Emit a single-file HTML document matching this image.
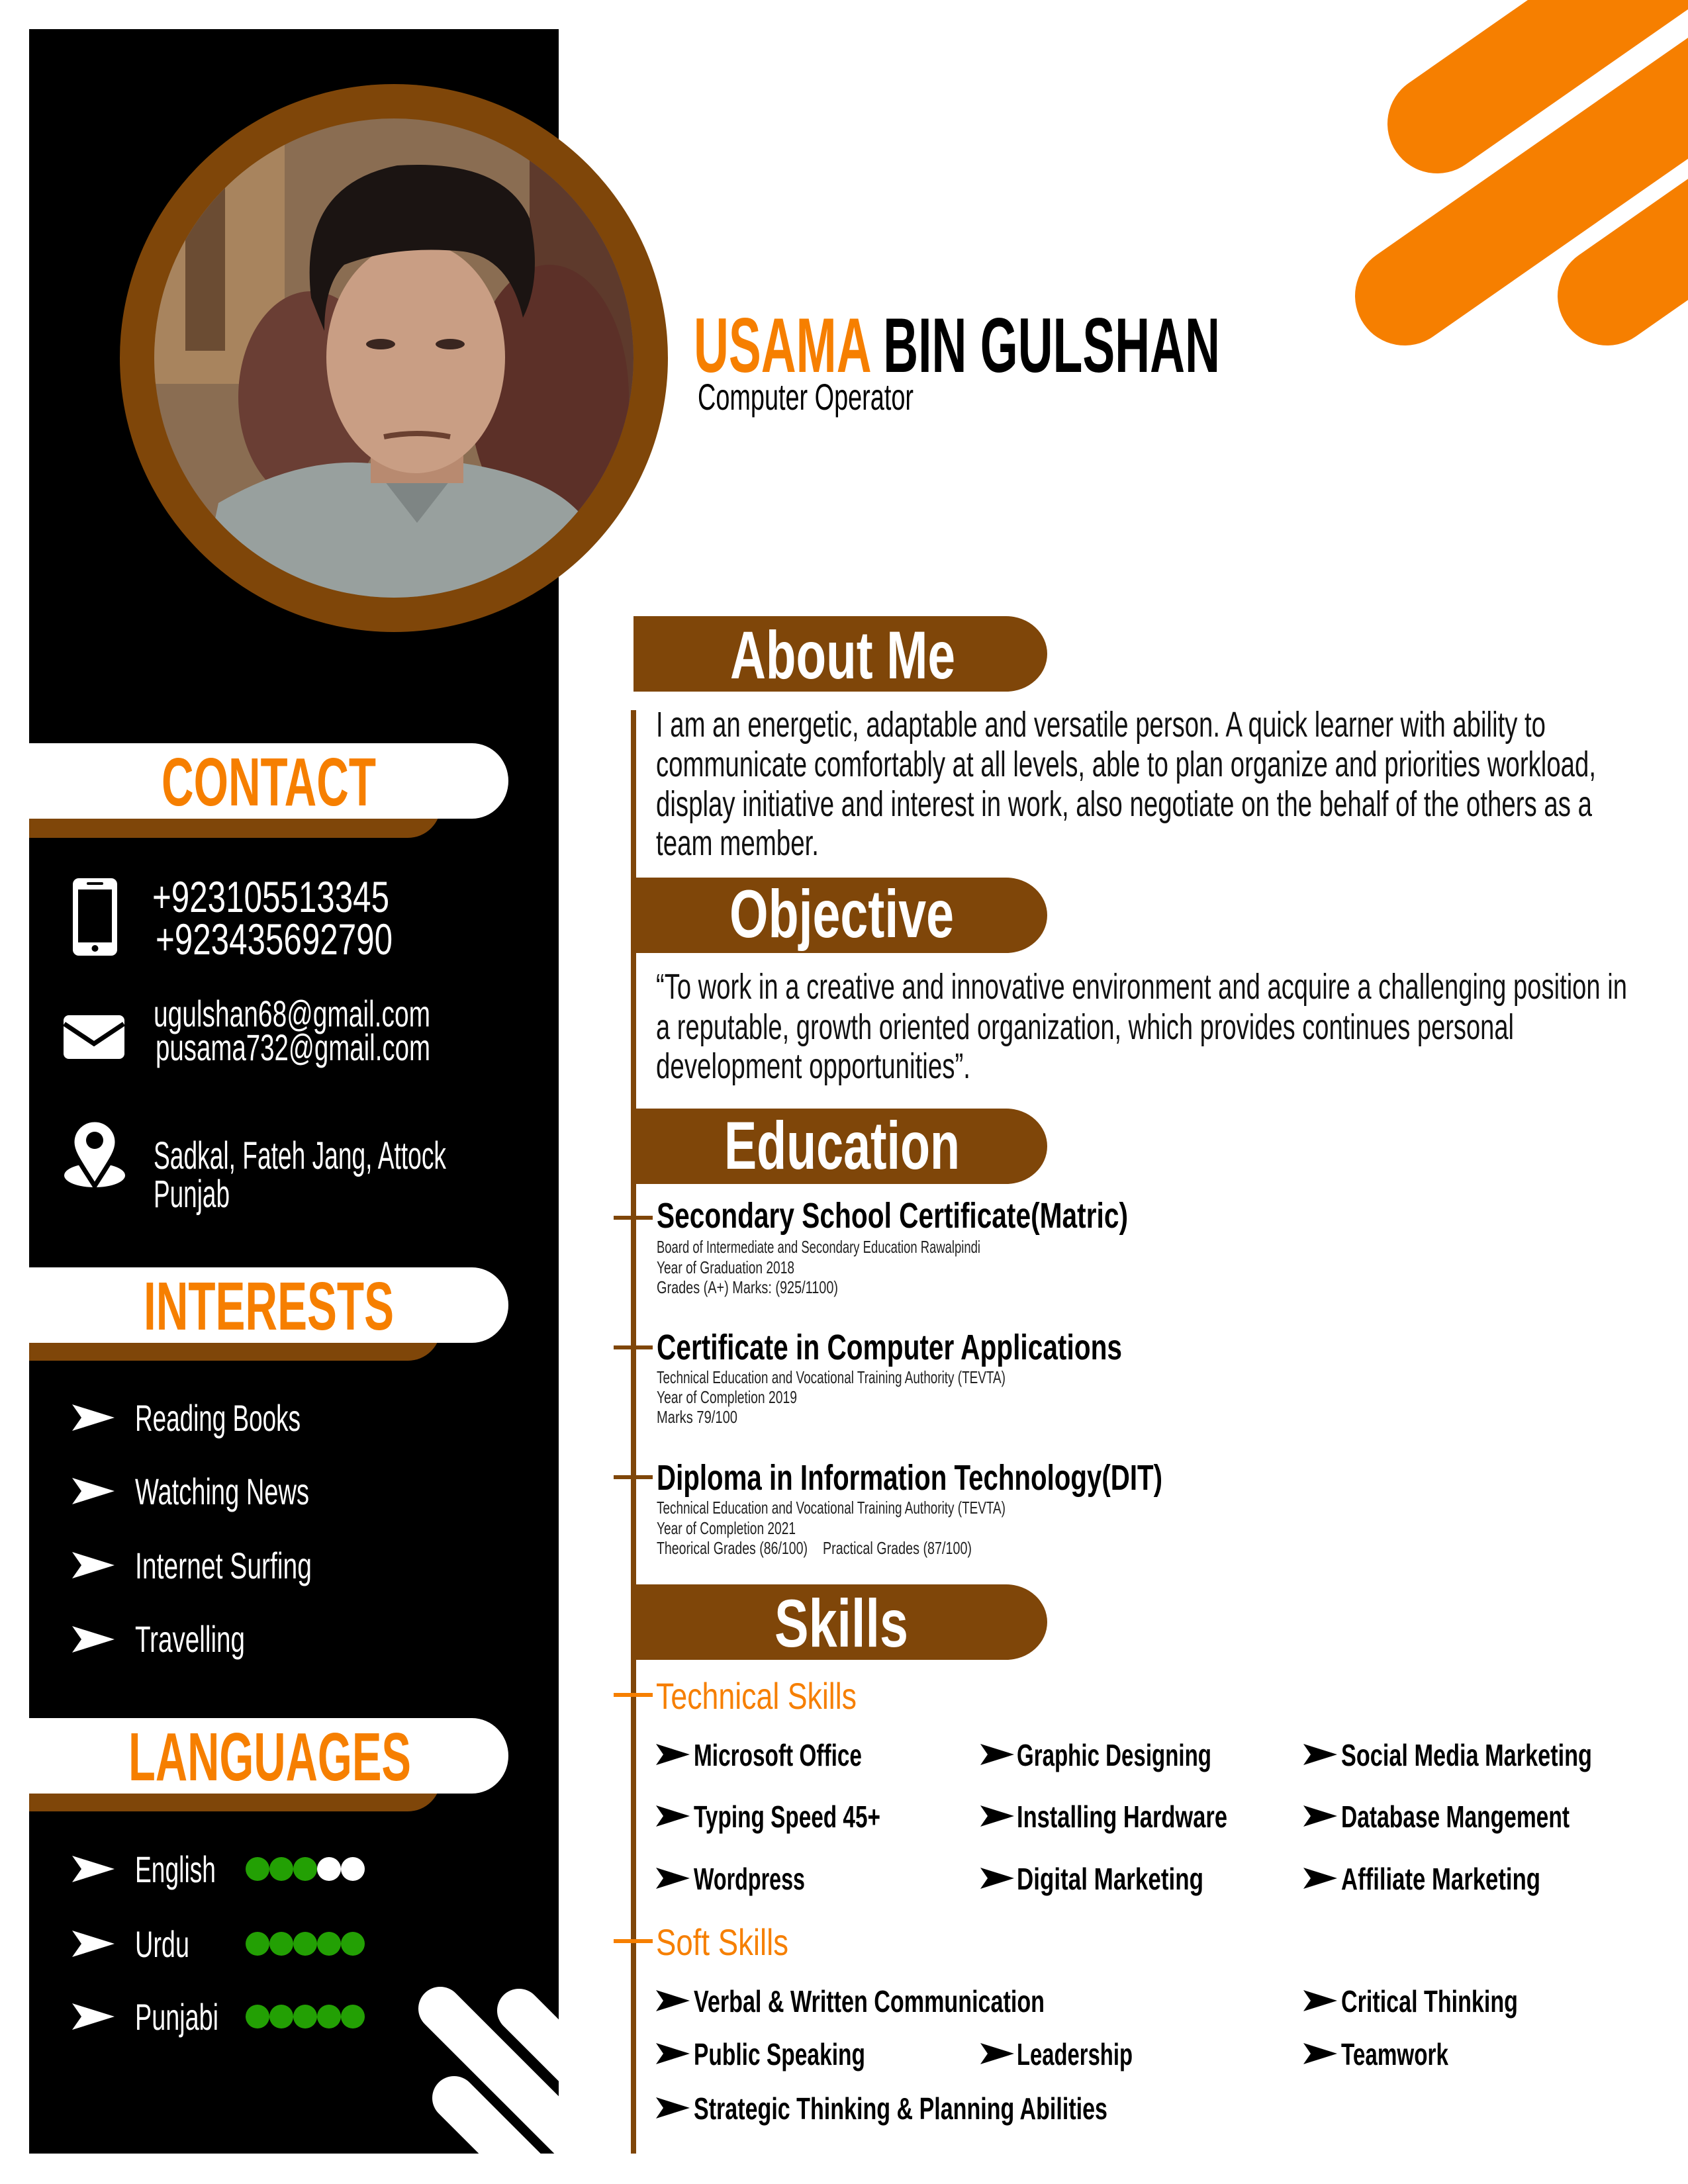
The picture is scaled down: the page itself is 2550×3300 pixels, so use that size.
<!DOCTYPE html>
<html><head><meta charset="utf-8"><style>
html,body{margin:0;padding:0;background:#fff;}
svg{display:block;}
text{font-family:"Liberation Sans Narrow","Liberation Sans",sans-serif;}
.b{font-weight:bold;}
</style></head><body>
<svg width="2550" height="3300" viewBox="0 0 2550 3300" xmlns="http://www.w3.org/2000/svg">
<defs>
<clipPath id="sb"><rect x="44" y="44" width="800" height="3210"/></clipPath>
<clipPath id="ph"><circle cx="595" cy="541" r="362"/></clipPath>
<clipPath id="pg"><rect x="0" y="0" width="2550" height="3300"/></clipPath>
</defs>
<rect width="2550" height="3300" fill="#fff"/>
<!-- orange stripes -->
<g stroke="#f67f00" stroke-width="150" stroke-linecap="round" clip-path="url(#pg)">
<line x1="2171" y1="187" x2="2700" y2="-182"/>
<line x1="2122" y1="447" x2="2800" y2="-26"/>
<line x1="2428" y1="447" x2="2800" y2="187"/>
</g>
<!-- sidebar -->
<rect x="44" y="44" width="800" height="3210" fill="#000"/>
<g clip-path="url(#sb)" stroke="#fff" stroke-width="66" stroke-linecap="round">
<line x1="665" y1="3035" x2="1000" y2="3370"/>
<line x1="784" y1="3038" x2="1100" y2="3354"/>
<line x1="686" y1="3170" x2="900" y2="3384"/>
</g>
<!-- photo -->
<circle cx="595" cy="541" r="414" fill="#7f4609"/>
<g clip-path="url(#ph)">
<rect x="200" y="150" width="800" height="800" fill="#8a6d52"/>
<rect x="230" y="180" width="200" height="400" fill="#a8845e"/>
<rect x="280" y="230" width="60" height="300" fill="#6b4c33"/>
<rect x="800" y="180" width="200" height="500" fill="#5e3a2c"/>
<ellipse cx="470" cy="600" rx="110" ry="160" fill="#6a3e34"/>
<ellipse cx="830" cy="600" rx="120" ry="200" fill="#5c3028"/>
<path d="M290,950 L330,760 Q450,690 560,700 L700,700 Q830,720 880,780 L920,950 Z" fill="#98a09e"/>
<path d="M560,700 L630,790 L700,700 Z" fill="#7e8584"/>
<rect x="560" y="640" width="140" height="90" fill="#b88a70"/>
<ellipse cx="628" cy="540" rx="135" ry="175" fill="#c99e84"/>
<path d="M470,450 Q450,280 600,250 Q760,240 800,330 Q820,420 790,480 Q770,390 700,380 Q600,370 520,400 Q490,430 490,500 Z" fill="#1b1412"/>
<ellipse cx="575" cy="520" rx="22" ry="8" fill="#3a2620"/>
<ellipse cx="680" cy="520" rx="22" ry="8" fill="#3a2620"/>
<path d="M580,660 Q630,650 680,660" stroke="#6a4030" stroke-width="8" fill="none"/>
</g>
<!-- name -->
<text x="1048" y="562" font-size="117" class="b" textLength="795" lengthAdjust="spacingAndGlyphs"><tspan fill="#f67f00">USAMA</tspan><tspan fill="#000"> BIN GULSHAN</tspan></text>
<text x="1054" y="619" font-size="56" fill="#000" textLength="326" lengthAdjust="spacingAndGlyphs">Computer Operator</text>

<!-- sidebar headings -->
<g>
<path d="M44,1150 H616 a50,50 0 0 1 50,50 v16 a50,50 0 0 1 -50,50 H44 Z" fill="#7f4609"/>
<path d="M44,1123 H713 a55,57 0 0 1 55,57 a55,57 0 0 1 -55,57 H44 Z" fill="#fff"/>
<text x="244" y="1217" font-size="103" class="b" fill="#f67f00" textLength="324" lengthAdjust="spacingAndGlyphs">CONTACT</text>
<path d="M44,1942 H616 a50,50 0 0 1 50,50 v14 a50,50 0 0 1 -50,50 H44 Z" fill="#7f4609"/>
<path d="M44,1915 H713 a55,57 0 0 1 55,57 a55,57 0 0 1 -55,57 H44 Z" fill="#fff"/>
<text x="217" y="2009" font-size="103" class="b" fill="#f67f00" textLength="378" lengthAdjust="spacingAndGlyphs">INTERESTS</text>
<path d="M44,2623 H616 a50,50 0 0 1 50,50 v14 a50,50 0 0 1 -50,50 H44 Z" fill="#7f4609"/>
<path d="M44,2596 H713 a55,57 0 0 1 55,57 a55,57 0 0 1 -55,57 H44 Z" fill="#fff"/>
<text x="194" y="2690" font-size="103" class="b" fill="#f67f00" textLength="427" lengthAdjust="spacingAndGlyphs">LANGUAGES</text>
</g>
<!-- contact icons -->
<rect x="110" y="1327" width="67" height="117" rx="9" fill="#fff"/>
<rect x="118" y="1344" width="51" height="80" fill="#000"/>
<rect x="131" y="1333" width="25" height="4" rx="2" fill="#000"/>
<circle cx="143.5" cy="1433" r="5" fill="#000"/>
<rect x="96" y="1534" width="92" height="66" rx="8" fill="#fff"/>
<polyline points="97,1547 142,1577 187,1547" fill="none" stroke="#000" stroke-width="7"/>
<ellipse cx="143" cy="1776" rx="46" ry="18" fill="#fff"/>
<path d="M143,1692 a34,34 0 0 1 34,34 c0,15 -10,28 -34,66 c-24,-38 -34,-51 -34,-66 a34,34 0 0 1 34,-34 z" fill="#fff" stroke="#000" stroke-width="7"/>
<circle cx="143" cy="1723" r="13" fill="#000"/>
<g fill="#fff">
<text x="230" y="1378" font-size="66" textLength="358" lengthAdjust="spacingAndGlyphs">+923105513345</text>
<text x="235" y="1442" font-size="66" textLength="358" lengthAdjust="spacingAndGlyphs">+923435692790</text>
<text x="232" y="1551" font-size="56" textLength="418" lengthAdjust="spacingAndGlyphs">ugulshan68@gmail.com</text>
<text x="235" y="1602" font-size="56" textLength="415" lengthAdjust="spacingAndGlyphs">pusama732@gmail.com</text>
<text x="232" y="1766" font-size="58" textLength="442" lengthAdjust="spacingAndGlyphs">Sadkal, Fateh Jang, Attock</text>
<text x="232" y="1824" font-size="58" textLength="115" lengthAdjust="spacingAndGlyphs">Punjab</text>
</g>
<!-- interests -->
<g fill="#fff">
<path d="M109,2122 L173,2142 L109,2162 L123,2142 Z"/>
<path d="M109,2233 L173,2253 L109,2273 L123,2253 Z"/>
<path d="M109,2345 L173,2365 L109,2385 L123,2365 Z"/>
<path d="M109,2457 L173,2477 L109,2497 L123,2477 Z"/>
<text x="204" y="2162" font-size="56" textLength="250" lengthAdjust="spacingAndGlyphs">Reading Books</text>
<text x="204" y="2273" font-size="56" textLength="263" lengthAdjust="spacingAndGlyphs">Watching News</text>
<text x="204" y="2385" font-size="56" textLength="267" lengthAdjust="spacingAndGlyphs">Internet Surfing</text>
<text x="204" y="2496" font-size="56" textLength="166" lengthAdjust="spacingAndGlyphs">Travelling</text>
<path d="M109,2804 L173,2824 L109,2844 L123,2824 Z"/>
<path d="M109,2917 L173,2937 L109,2957 L123,2937 Z"/>
<path d="M109,3027 L173,3047 L109,3067 L123,3047 Z"/>
<text x="204" y="2844" font-size="56" textLength="122" lengthAdjust="spacingAndGlyphs">English</text>
<text x="204" y="2957" font-size="56" textLength="82" lengthAdjust="spacingAndGlyphs">Urdu</text>
<text x="204" y="3067" font-size="56" textLength="126" lengthAdjust="spacingAndGlyphs">Punjabi</text>
</g>
<g fill="#23a004">
<circle cx="389" cy="2824" r="18"/><circle cx="425" cy="2824" r="18"/><circle cx="461" cy="2824" r="18"/>
<circle cx="389" cy="2937" r="18"/><circle cx="425" cy="2937" r="18"/><circle cx="461" cy="2937" r="18"/><circle cx="497" cy="2937" r="18"/><circle cx="533" cy="2937" r="18"/>
<circle cx="389" cy="3047" r="18"/><circle cx="425" cy="3047" r="18"/><circle cx="461" cy="3047" r="18"/><circle cx="497" cy="3047" r="18"/><circle cx="533" cy="3047" r="18"/>
</g>
<circle cx="497" cy="2824" r="18" fill="#fff"/><circle cx="533" cy="2824" r="18" fill="#fff"/>

<!-- main timeline -->
<rect x="953" y="1073" width="8" height="2181" fill="#7f4609"/>
<g fill="#7f4609">
<path d="M957,931 H1520 a62,57 0 0 1 62,57 a62,57 0 0 1 -62,57 H957 Z"/>
<path d="M957,1326 H1520 a62,57 0 0 1 62,57 a62,57 0 0 1 -62,57 H957 Z"/>
<path d="M957,1675 H1520 a62,57 0 0 1 62,57 a62,57 0 0 1 -62,57 H957 Z"/>
<path d="M957,2394 H1520 a62,57 0 0 1 62,57 a62,57 0 0 1 -62,57 H957 Z"/>
</g>
<g fill="#fff" class="b">
<text x="1103" y="1025" font-size="102" class="b" textLength="340" lengthAdjust="spacingAndGlyphs">About Me</text>
<text x="1102" y="1416" font-size="102" class="b" textLength="339" lengthAdjust="spacingAndGlyphs">Objective</text>
<text x="1094" y="1766" font-size="102" class="b" textLength="356" lengthAdjust="spacingAndGlyphs">Education</text>
<text x="1170" y="2488" font-size="102" class="b" textLength="202" lengthAdjust="spacingAndGlyphs">Skills</text>
</g>
<g fill="#111" font-size="54">
<text x="991" y="1113" textLength="1344" lengthAdjust="spacingAndGlyphs">I am an energetic, adaptable and versatile person. A quick learner with ability to</text>
<text x="991" y="1173" textLength="1420" lengthAdjust="spacingAndGlyphs">communicate comfortably at all levels, able to plan organize and priorities workload,</text>
<text x="991" y="1233" textLength="1414" lengthAdjust="spacingAndGlyphs">display initiative and interest in work, also negotiate on the behalf of the others as a</text>
<text x="991" y="1292" textLength="246" lengthAdjust="spacingAndGlyphs">team member.</text>
<text x="991" y="1509" textLength="1467" lengthAdjust="spacingAndGlyphs">“To work in a creative and innovative environment and acquire a challenging position in</text>
<text x="991" y="1570" textLength="1296" lengthAdjust="spacingAndGlyphs">a reputable, growth oriented organization, which provides continues personal</text>
<text x="991" y="1629" textLength="475" lengthAdjust="spacingAndGlyphs">development opportunities”.</text>
</g>
<!-- ticks -->
<g fill="#7f4609">
<rect x="927" y="1837" width="59" height="6"/>
<rect x="927" y="2033" width="59" height="6"/>
<rect x="927" y="2229" width="59" height="6"/>
</g>
<g fill="#f67f00">
<rect x="927" y="2558" width="59" height="6"/>
<rect x="927" y="2930" width="59" height="6"/>
</g>
<g fill="#000">
<text x="992" y="1855" font-size="54" class="b" textLength="712" lengthAdjust="spacingAndGlyphs">Secondary School Certificate(Matric)</text>
<text x="992" y="2054" font-size="54" class="b" textLength="703" lengthAdjust="spacingAndGlyphs">Certificate in Computer Applications</text>
<text x="992" y="2251" font-size="54" class="b" textLength="764" lengthAdjust="spacingAndGlyphs">Diploma in Information Technology(DIT)</text>
</g>
<g fill="#222" font-size="26">
<text x="992" y="1893" textLength="489" lengthAdjust="spacingAndGlyphs">Board of Intermediate and Secondary Education Rawalpindi</text>
<text x="992" y="1924" textLength="208" lengthAdjust="spacingAndGlyphs">Year of Graduation 2018</text>
<text x="992" y="1954" textLength="274" lengthAdjust="spacingAndGlyphs">Grades (A+)  Marks: (925/1100)</text>
<text x="992" y="2090" textLength="527" lengthAdjust="spacingAndGlyphs">Technical Education and Vocational Training Authority (TEVTA)</text>
<text x="992" y="2120" textLength="212" lengthAdjust="spacingAndGlyphs">Year of Completion 2019</text>
<text x="992" y="2150" textLength="122" lengthAdjust="spacingAndGlyphs">Marks 79/100</text>
<text x="992" y="2287" textLength="527" lengthAdjust="spacingAndGlyphs">Technical Education and Vocational Training Authority (TEVTA)</text>
<text x="992" y="2318" textLength="210" lengthAdjust="spacingAndGlyphs">Year of Completion 2021</text>
<text x="992" y="2348" textLength="228" lengthAdjust="spacingAndGlyphs">Theorical Grades (86/100)</text>
<text x="1243" y="2348" textLength="225" lengthAdjust="spacingAndGlyphs">Practical Grades (87/100)</text>
</g>
<!-- skills -->
<text x="991" y="2582" font-size="56" fill="#f67f00" textLength="303" lengthAdjust="spacingAndGlyphs">Technical Skills</text>
<text x="991" y="2954" font-size="56" fill="#f67f00" textLength="200" lengthAdjust="spacingAndGlyphs">Soft Skills</text>
<g fill="#000">
<path d="M991,2635 L1042,2651 L991,2667 L1002,2651 Z"/>
<path d="M1481,2635 L1532,2651 L1481,2667 L1492,2651 Z"/>
<path d="M1969,2635 L2020,2651 L1969,2667 L1980,2651 Z"/>
<path d="M991,2728 L1042,2744 L991,2760 L1002,2744 Z"/>
<path d="M1481,2728 L1532,2744 L1481,2760 L1492,2744 Z"/>
<path d="M1969,2728 L2020,2744 L1969,2760 L1980,2744 Z"/>
<path d="M991,2822 L1042,2838 L991,2854 L1002,2838 Z"/>
<path d="M1481,2822 L1532,2838 L1481,2854 L1492,2838 Z"/>
<path d="M1969,2822 L2020,2838 L1969,2854 L1980,2838 Z"/>
<path d="M991,3007 L1042,3023 L991,3039 L1002,3023 Z"/>
<path d="M1969,3007 L2020,3023 L1969,3039 L1980,3023 Z"/>
<path d="M991,3087 L1042,3103 L991,3119 L1002,3103 Z"/>
<path d="M1481,3087 L1532,3103 L1481,3119 L1492,3103 Z"/>
<path d="M1969,3087 L2020,3103 L1969,3119 L1980,3103 Z"/>
<path d="M991,3169 L1042,3185 L991,3201 L1002,3185 Z"/>
</g>
<g fill="#000" font-size="46" class="b">
<text x="1048" y="2668" textLength="254" lengthAdjust="spacingAndGlyphs">Microsoft Office</text>
<text x="1536" y="2668" textLength="294" lengthAdjust="spacingAndGlyphs">Graphic Designing</text>
<text x="2026" y="2668" textLength="379" lengthAdjust="spacingAndGlyphs">Social Media Marketing</text>
<text x="1048" y="2761" textLength="282" lengthAdjust="spacingAndGlyphs">Typing Speed 45+</text>
<text x="1536" y="2761" textLength="318" lengthAdjust="spacingAndGlyphs">Installing Hardware</text>
<text x="2026" y="2761" textLength="345" lengthAdjust="spacingAndGlyphs">Database Mangement</text>
<text x="1048" y="2855" textLength="168" lengthAdjust="spacingAndGlyphs">Wordpress</text>
<text x="1536" y="2855" textLength="282" lengthAdjust="spacingAndGlyphs">Digital Marketing</text>
<text x="2026" y="2855" textLength="301" lengthAdjust="spacingAndGlyphs">Affiliate Marketing</text>
<text x="1048" y="3040" textLength="530" lengthAdjust="spacingAndGlyphs">Verbal &amp; Written Communication</text>
<text x="2026" y="3040" textLength="267" lengthAdjust="spacingAndGlyphs">Critical Thinking</text>
<text x="1048" y="3120" textLength="259" lengthAdjust="spacingAndGlyphs">Public Speaking</text>
<text x="1536" y="3120" textLength="175" lengthAdjust="spacingAndGlyphs">Leadership</text>
<text x="2026" y="3120" textLength="162" lengthAdjust="spacingAndGlyphs">Teamwork</text>
<text x="1048" y="3202" textLength="625" lengthAdjust="spacingAndGlyphs">Strategic Thinking &amp; Planning Abilities</text>
</g>
</svg>
</body></html>
